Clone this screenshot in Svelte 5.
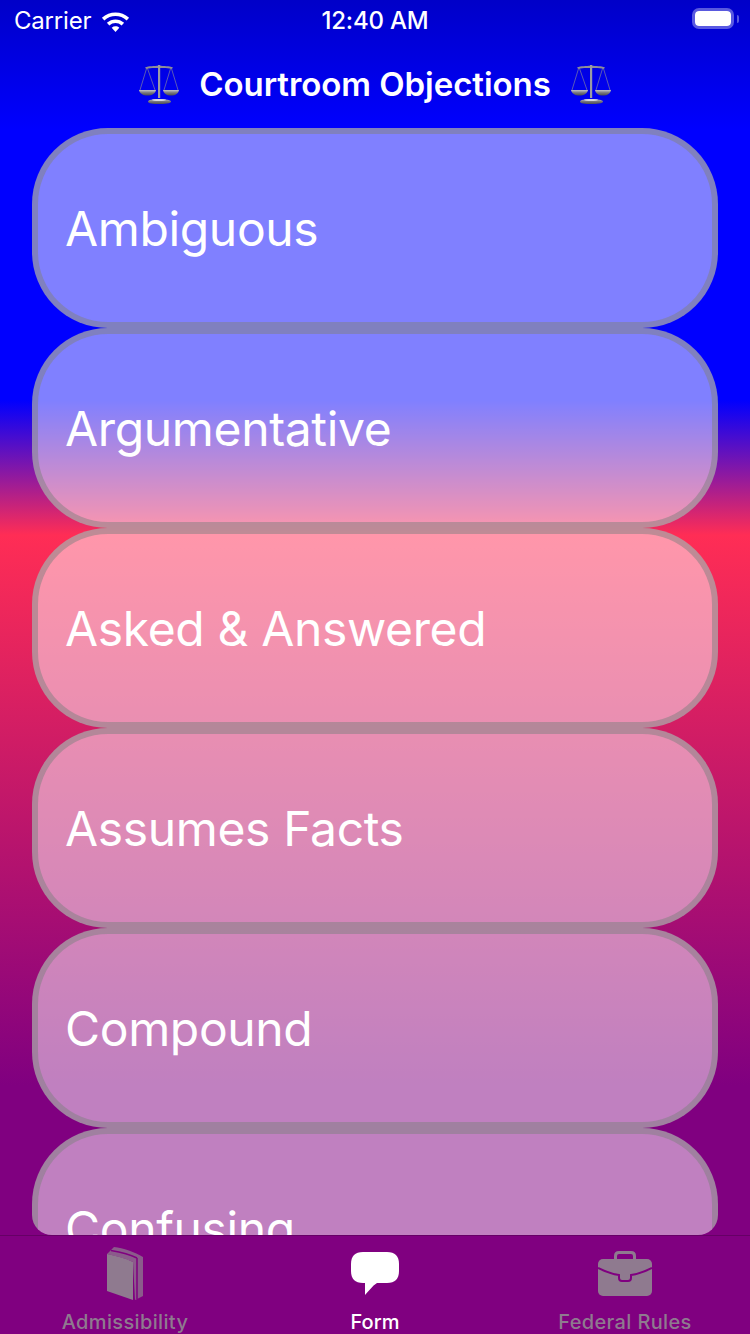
<script lang="ts">
	const objections = ['Ambiguous', 'Argumentative', 'Asked & Answered', 'Assumes Facts', 'Compound', 'Confusing'];
</script>

{#snippet scales()}
	<svg class="scales" viewBox="0 0 40 40" aria-hidden="true">
		<defs>
			<linearGradient id="metal" x1="0" y1="0" x2="0" y2="1">
				<stop offset="0" stop-color="#c4c4ca" />
				<stop offset="0.5" stop-color="#77777e" />
				<stop offset="1" stop-color="#4a4a52" />
			</linearGradient>
		</defs>
		<g stroke="#8080a0" stroke-width="0.7" fill="none">
			<path d="M8 3 1 26M8 3 16 26M32 3 25 26M32 3 39 26" />
		</g>
		<path d="M6 3.500C10 1.500 15 2.500 20 1.500 25 2.500 30 1.500 34 3.500L33 4.800C28 3.600 24 4 20 4 16 4 12 3.600 7 4.800Z" fill="#8e8e98" />
		<rect x="19" y="1" width="2.200" height="33" fill="#9a9aa4" />
		<path d="M0 26H17C16.500 29.500 13 31.500 8.500 31.500 4 31.500 .5 29.500 0 26Z" fill="url(#metal)" />
		<path d="M24 26H40C39.500 29.500 36.500 31.500 32 31.500 27.500 31.500 24.500 29.500 24 26Z" fill="url(#metal)" />
		<path d="M9 37.500C9 36 14 35 20 35 26 35 32 36 32 37.500 32 39.500 26 40 20 40 14 40 9 39.500 9 37.500Z" fill="url(#metal)" />
		<ellipse cx="20" cy="36" rx="7" ry="0.900" fill="#d8d8e2" />
	</svg>
{/snippet}

<div class="screen">
	<div class="status-bar">
		<div class="status-left">
			<span>Carrier</span>
			<svg class="wifi" viewBox="0 0 32 24" aria-hidden="true">
				<path d="M1 8.500C9.500 .5 22.500 .5 31 8.500L28.300 11.400C21.300 4.800 10.700 4.800 3.700 11.400Z" fill="#fff" />
				<path d="M6.500 14C12 9 20 9 25.500 14L22.800 16.900C18.800 13.300 13.200 13.300 9.200 16.900Z" fill="#fff" />
				<path d="M11.800 19.500C14.300 17.400 17.700 17.400 20.200 19.500L16 24Z" fill="#fff" />
			</svg>
		</div>
		<span class="clock">12:40 AM</span>
		<div class="battery">
			<div class="battery-body"><div class="battery-level"></div></div>
			<div class="battery-nub"></div>
		</div>
	</div>

	<header class="title-bar">
		{@render scales()}
		<h1>Courtroom Objections</h1>
		{@render scales()}
	</header>

	<main class="list">
		{#each objections as name}
			<div class="card">{name}</div>
		{/each}
	</main>

	<nav class="tabs">
		<div class="tab">
			<div class="icon-box">
				<svg class="book" viewBox="0 0 36 53" aria-hidden="true">
					<path d="M0 7 7 0C16 1 28 5 36 10V49L28 53 26 15C18 11 8 9 0 7Z" fill="#8f7a8f" opacity="0.75" />
					<path d="M30 11V52M4 3.500C13 5 24 8 30 11" stroke="#800080" stroke-width="1.500" fill="none" />
					<path d="M0 7C9 9 18 11 26 15V53L0 44Z" fill="#8f7a8f" />
				</svg>
			</div>
			<span>Admissibility</span>
		</div>
		<div class="tab active">
			<div class="icon-box">
				<svg class="bubble" viewBox="0 0 48 43" aria-hidden="true">
					<path d="M12 0H36C44 0 48 4 48 12V19C48 27 44 31 36 31H26C21 34 18 39 14 43V31H12C4 31 0 27 0 19V12C0 4 4 0 12 0Z" fill="#fff" />
				</svg>
			</div>
			<span>Form</span>
		</div>
		<div class="tab">
			<div class="icon-box">
				<svg class="case" viewBox="0 0 54 45" aria-hidden="true">
					<path d="M17.500 9V5C17.500 2.800 18.800 1.500 21 1.500H33C35.200 1.500 36.500 2.800 36.500 5V9" fill="none" stroke="#8f7a8f" stroke-width="3" />
					<rect y="8" width="54" height="37" rx="5" fill="#8f7a8f" />
					<path d="M0 17C8 21 14 23 21 24V27Q21 30 24 30H30Q33 30 33 27V24C40 23 46 21 54 17" stroke="#800080" stroke-width="2" fill="none" />
				</svg>
			</div>
			<span>Federal Rules</span>
		</div>
	</nav>
</div>

<style>
	:global(body) {
		margin: 0;
	}

	.screen {
		width: 750px;
		height: 1334px;
		display: flex;
		flex-direction: column;
		overflow: hidden;
		font-family: Inter, 'Liberation Sans', sans-serif;
		color: #fff;
		background: linear-gradient(
			to bottom,
			#0000c8 0,
			#0000ff 130px,
			#0000ff 400px,
			#ff2d55 535px,
			#800080 1085px,
			#800080 100%
		);
	}

	.status-bar {
		height: 40px;
		flex: none;
		display: flex;
		align-items: center;
		justify-content: space-between;
		padding: 0 11px 0 14px;
		position: relative;
		font-size: 24px;
	}

	.status-left {
		display: flex;
		align-items: center;
		gap: 10px;
		letter-spacing: -0.2px;
	}

	.wifi {
		width: 29px;
		height: 22px;
		margin-top: 1px;
	}

	.clock {
		position: absolute;
		left: 0;
		right: 0;
		text-align: center;
		font-weight: 500;
		letter-spacing: -0.2px;
	}

	.battery {
		display: flex;
		align-items: center;
		gap: 3px;
		margin-bottom: 3px;
		position: relative;
	}

	.battery-body {
		width: 42px;
		height: 21px;
		box-sizing: border-box;
		border: 3px solid rgba(255, 255, 255, 0.35);
		border-radius: 7px;
	}

	.battery-level {
		height: 100%;
		background: #fff;
		border-radius: 4px;
	}

	.battery-nub {
		width: 2px;
		height: 8px;
		border-radius: 0 2px 2px 0;
		background: rgba(255, 255, 255, 0.35);
	}

	.title-bar {
		height: 88px;
		flex: none;
		display: flex;
		align-items: center;
		justify-content: center;
		gap: 20px;
	}

	h1 {
		margin: 0;
		font-size: 33px;
		font-weight: 600;
		letter-spacing: -0.05px;
	}

	.scales {
		width: 40px;
		height: 40px;
	}

	.list {
		flex: 1;
		margin: 0 32px;
		border-radius: 20px;
		overflow: hidden;
	}

	.card {
		height: 200px;
		box-sizing: border-box;
		padding-left: 27px;
		display: flex;
		align-items: center;
		border: 6px solid rgba(128, 128, 128, 0.5);
		border-radius: 76px;
		background: rgba(255, 255, 255, 0.5);
		font-size: 48px;
		letter-spacing: -0.35px;
	}

	.tabs {
		height: 99px;
		flex: none;
		box-sizing: border-box;
		display: flex;
		background: #800080;
		border-top: 1px solid rgba(0, 0, 0, 0.2);
	}

	.tab {
		flex: 1;
		display: flex;
		flex-direction: column;
		align-items: center;
		color: #8f7a8f;
		font-size: 20px;
		font-weight: 500;
		letter-spacing: 0.35px;
	}

	.tab.active {
		color: #fff;
		letter-spacing: 0;
	}

	.icon-box {
		height: 75px;
		display: flex;
		align-items: center;
	}

	.book {
		width: 36px;
		height: 53px;
		filter: blur(0.4px);
	}

	.bubble {
		width: 48px;
		height: 43px;
		filter: blur(0.6px);
	}

	.case {
		width: 54px;
		height: 45px;
	}
</style>
